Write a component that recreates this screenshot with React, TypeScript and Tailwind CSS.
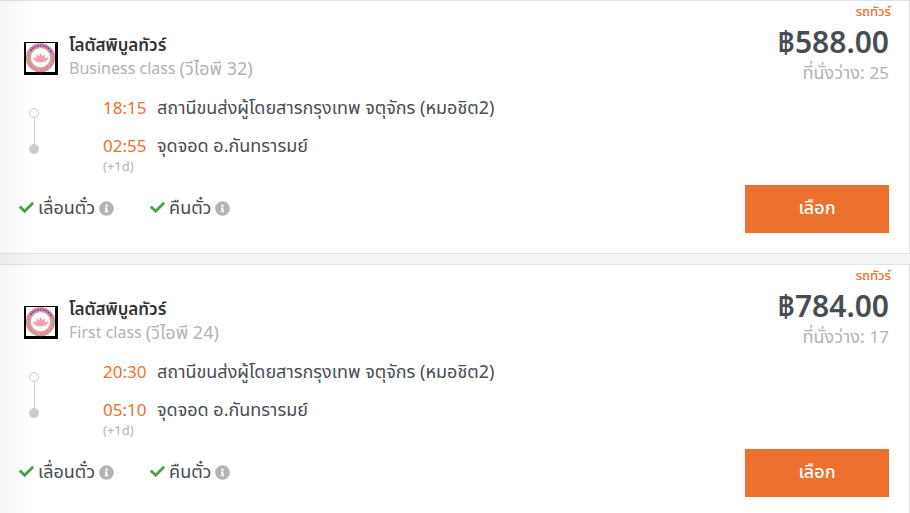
import { FaCheck, FaInfoCircle } from 'react-icons/fa'

type Trip = {
  id: number
  operator: string
  seatClass: string
  vehicle: string
  price: string
  seats: number
  departure: string
  arrival: string
}

const trips: Trip[] = [
  { id: 1, operator: 'โลตัสพิบูลทัวร์', seatClass: 'Business class', vehicle: '(วีไอพี 32)', price: '฿588.00', seats: 25, departure: '18:15', arrival: '02:55' },
  { id: 2, operator: 'โลตัสพิบูลทัวร์', seatClass: 'First class', vehicle: '(วีไอพี 24)', price: '฿784.00', seats: 17, departure: '20:30', arrival: '05:10' },
]

function OperatorLogo() {
  return (
    <svg viewBox="0 0 34 33" className="w-[34px] h-[33px] shrink-0" aria-hidden="true">
      <rect width="34" height="33" fill="#000" />
      <rect x="2" y="1" width="29" height="29" fill="#fff" />
      <circle cx="16.5" cy="15.700" r="12.2" fill="none" stroke="#e29a98" strokeWidth="4.4" />
      <circle cx="16.5" cy="15.700" r="14.2" fill="none" stroke="#b98a90" strokeWidth="0.7" />
      <circle cx="16.5" cy="15.700" r="10" fill="none" stroke="#c58a90" strokeWidth="0.6" />
      <circle cx="16.5" cy="15.700" r="12.2" fill="none" stroke="#b57ba8" strokeWidth="1.2" strokeDasharray="1.2 2.4" />
      <path d="M6.4 8.900A12.2 12.2 0 0 1 27.800 11.200" fill="none" stroke="#7a4ccc" strokeWidth="1.8" strokeDasharray="2 0.8" />
      <path d="M9 15.500c2 0 3 .5 4 1.500-.8-2-.7-3.500-.4-4.600 1.200.5 2 1.200 2.600 2.200.2-1.600.7-2.800 1.500-3.800.8 1 1.300 2.200 1.500 3.800.6-1 1.400-1.700 2.600-2.200.3 1.100.4 2.600-.4 4.600 1-1 2-1.500 4-1.500-.8 2.700-3 4.800-7.700 4.800S9.800 18.200 9 15.500z" fill="#f29db2" />
    </svg>
  )
}

function Policy({ label }: { label: string }) {
  return (
    <li className="flex items-center">
      <FaCheck className="w-[15px] h-[15px] mr-1 text-[#4da34d]" />
      <span className="text-lg leading-6">{label}</span>
      <FaInfoCircle className="w-[15px] h-[15px] ml-1 mt-0.5 text-[#b3b3b3]" />
    </li>
  )
}

function TripCard({ trip }: { trip: Trip }) {
  return (
    <article className="bg-white border-y border-r border-[#e1e1e8] px-5 pb-5">
      <div className="flex justify-between">
        <div className="flex pt-8 pl-1">
          <div className="pt-[9px]">
            <OperatorLogo />
          </div>
          <div className="ml-[11px]">
            <h2 className="h-[23px] text-[17px] leading-6 font-semibold text-[#333]">{trip.operator}</h2>
            <p className="flex gap-1 leading-6 text-[#b3b3b3]">
              <span>{trip.seatClass}</span>
              <span className="text-lg leading-6">{trip.vehicle}</span>
            </p>
          </div>
        </div>
        <div className="text-right">
          <p className="h-[23px] -mr-0.5 text-[13px] leading-5 font-medium text-[#ec712e]">รถทัวร์</p>
          <p className="h-9 text-[30px] leading-9 font-semibold">{trip.price}</p>
          <p className="text-lg leading-6 text-[#b3b3b3]">ที่นั่งว่าง: <span className="text-[17px]">{trip.seats}</span></p>
        </div>
      </div>

      <div className="flex mt-2 h-[92px]">
        <div className="flex flex-col items-center w-[10px] ml-[9px] pt-[15px]">
          <span className="w-[10px] h-[10px] rounded-full border border-[#ccc]" />
          <span className="w-px h-[26px] bg-[#ccc]" />
          <span className="w-[10px] h-[10px] rounded-full bg-[#ccc]" />
        </div>
        <div className="ml-16 pt-[3px] text-[17px] leading-6">
          <div className="flex h-[38px]">
            <time className="w-[54px] text-[#ec712e]">{trip.departure}</time>
            <span className="text-lg leading-[22px]">สถานีขนส่งผู้โดยสารกรุงเทพ จตุจักร (หมอชิต2)</span>
          </div>
          <div className="flex h-6">
            <time className="w-[54px] text-[#ec712e]">{trip.arrival}</time>
            <span className="text-lg leading-[22px]">จุดจอด อ.กันทรารมย์</span>
          </div>
          <p className="text-[13px] leading-4 text-[#b3b3b3]">(+1d)</p>
        </div>
      </div>

      <div className="flex justify-between">
        <ul className="flex items-center gap-9 pb-1 -ml-px">
          <Policy label="เลื่อนตั๋ว" />
          <Policy label="คืนตั๋ว" />
        </ul>
        <button type="button" className="w-36 h-12 pb-1 bg-[#ec712e] text-white text-lg font-medium cursor-pointer">เลือก</button>
      </div>
    </article>
  )
}

export default function App() {
  return (
    <main className="relative h-screen overflow-hidden bg-[#f4f4f4] text-base text-[#484d54] font-['Noto_Sans','Noto_Sans_Thai',sans-serif]">
      <div className="flex flex-col gap-[10px]">
        {trips.map(trip => <TripCard key={trip.id} trip={trip} />)}
      </div>
      <div className="absolute inset-y-0 left-0 w-8 bg-linear-to-r from-black/4 to-transparent pointer-events-none" />
    </main>
  )
}
